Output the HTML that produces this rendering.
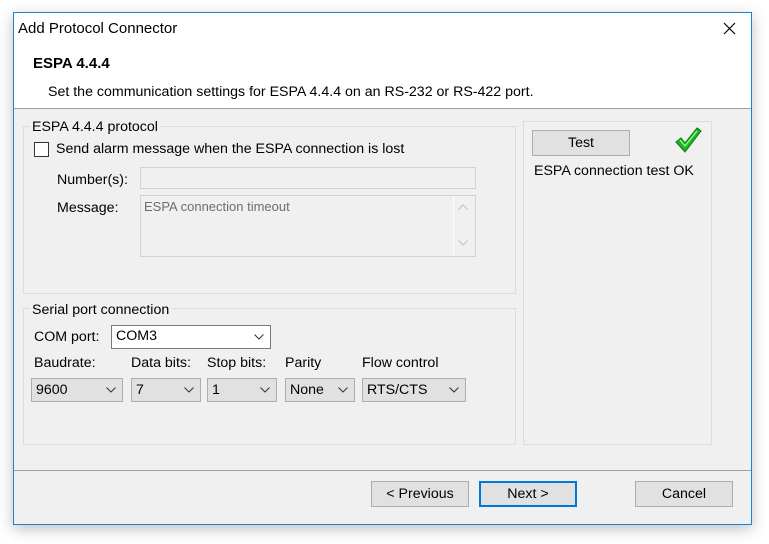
<!DOCTYPE html>
<html><head><style>
*{box-sizing:border-box;margin:0;padding:0}
body{width:769px;height:544px;background:#fff;font-family:"Liberation Sans",sans-serif;font-size:14.2px;color:#000;position:relative;overflow:hidden}
.a{position:absolute}
.win{left:13px;top:12px;width:739px;height:513px;border:1px solid #1883d7;background:#f0f0f0;box-shadow:0 4px 14px rgba(0,0,0,.25)}
.grp{border:1px solid #dcdcdc}
.lg{background:#f0f0f0;padding:0 2px}
.box{border:1px solid #d2d2d2;background:#f0f0f0}
.dd{border:1px solid #adadad;background:#e1e1e1;padding-left:4px;line-height:22px}
.dd svg{position:absolute;right:6px;top:8px}
.btn{border:1px solid #adadad;background:#e1e1e1;text-align:center;line-height:24px}
</style></head><body>
<div class="a win">
<div class="a" style="left:0;top:0;width:737px;height:96px;background:#fff;border-bottom:1px solid #a0a0a0"></div>
</div>
<div class="a" style="left:18px;top:20px;font-size:15px">Add Protocol Connector</div>
<svg class="a" style="left:723px;top:22px" width="13" height="13"><path d="M1 1L12 12M12 1L1 12" stroke="#000" stroke-width="1.2"/></svg>
<div class="a" style="left:33px;top:55px;font-weight:bold;font-size:15px">ESPA 4.4.4</div>
<div class="a" style="left:48px;top:84px">Set the communication settings for ESPA 4.4.4 on an RS-232 or RS-422 port.</div>

<div class="a grp" style="left:23px;top:126px;width:493px;height:168px"></div>
<div class="a lg" style="left:30px;top:119px">ESPA 4.4.4 protocol</div>
<div class="a" style="left:34px;top:142px;width:15px;height:15px;border:1px solid #333;background:#fff"></div>
<div class="a" style="left:56px;top:141px">Send alarm message when the ESPA connection is lost</div>
<div class="a" style="left:57px;top:172px">Number(s):</div>
<div class="a box" style="left:140px;top:167px;width:336px;height:22px"></div>
<div class="a" style="left:57px;top:200px">Message:</div>
<div class="a box" style="left:140px;top:195px;width:336px;height:62px"></div>
<div class="a" style="left:453px;top:196px;width:1px;height:60px;background:#fff"></div>
<div class="a" style="left:144px;top:199px;color:#6d6d6d;font-size:13px">ESPA connection timeout</div>
<svg class="a" style="left:458px;top:204px" width="10" height="6"><path d="M0.5 5.5L5 1L9.5 5.5" fill="none" stroke="#c0c0c0"/></svg>
<svg class="a" style="left:458px;top:240px" width="10" height="6"><path d="M0.5 0.5L5 5L9.5 0.5" fill="none" stroke="#c0c0c0"/></svg>

<div class="a grp" style="left:23px;top:308px;width:493px;height:137px"></div>
<div class="a lg" style="left:30px;top:302px">Serial port connection</div>
<div class="a" style="left:34px;top:329px">COM port:</div>
<div class="a dd" style="left:111px;top:325px;width:160px;height:24px;background:#fff;border-color:#7a7a7a;line-height:20px">COM3<svg width="10" height="6"><path d="M0.5 0.5L5 5L9.5 0.5" fill="none" stroke="#333"/></svg></div>
<div class="a" style="left:34px;top:355px">Baudrate:</div>
<div class="a" style="left:131px;top:355px">Data bits:</div>
<div class="a" style="left:207px;top:355px">Stop bits:</div>
<div class="a" style="left:285px;top:355px">Parity</div>
<div class="a" style="left:362px;top:355px">Flow control</div>
<div class="a dd" style="left:31px;top:378px;width:92px;height:24px">9600<svg width="10" height="6"><path d="M0.5 0.5L5 5L9.5 0.5" fill="none" stroke="#333"/></svg></div>
<div class="a dd" style="left:131px;top:378px;width:70px;height:24px">7<svg width="10" height="6"><path d="M0.5 0.5L5 5L9.5 0.5" fill="none" stroke="#333"/></svg></div>
<div class="a dd" style="left:207px;top:378px;width:70px;height:24px">1<svg width="10" height="6"><path d="M0.5 0.5L5 5L9.5 0.5" fill="none" stroke="#333"/></svg></div>
<div class="a dd" style="left:285px;top:378px;width:70px;height:24px">None<svg width="10" height="6"><path d="M0.5 0.5L5 5L9.5 0.5" fill="none" stroke="#333"/></svg></div>
<div class="a dd" style="left:362px;top:378px;width:104px;height:24px">RTS/CTS<svg width="10" height="6"><path d="M0.5 0.5L5 5L9.5 0.5" fill="none" stroke="#333"/></svg></div>

<div class="a grp" style="left:523px;top:121px;width:189px;height:324px"></div>
<div class="a btn" style="left:532px;top:130px;width:98px;height:26px">Test</div>
<svg class="a" style="left:674px;top:127px" width="28" height="26"><path d="M2 15L7 11L11 16L23 1L27 4L11 25Z" fill="#1db41d" stroke="#0a7a0a" stroke-width="1"/><path d="M6 13L11 19L23 4" fill="none" stroke="#8ef08e" stroke-width="1.5"/></svg>
<div class="a" style="left:534px;top:163px">ESPA connection test OK</div>

<div class="a" style="left:14px;top:470px;width:737px;height:1px;background:#a0a0a0"></div>
<div class="a btn" style="left:371px;top:481px;width:98px;height:26px">&lt; Previous</div>
<div class="a btn" style="left:479px;top:481px;width:98px;height:26px;border:2px solid #0078d7;line-height:22px">Next &gt;</div>
<div class="a btn" style="left:635px;top:481px;width:98px;height:26px">Cancel</div>
</body></html>
